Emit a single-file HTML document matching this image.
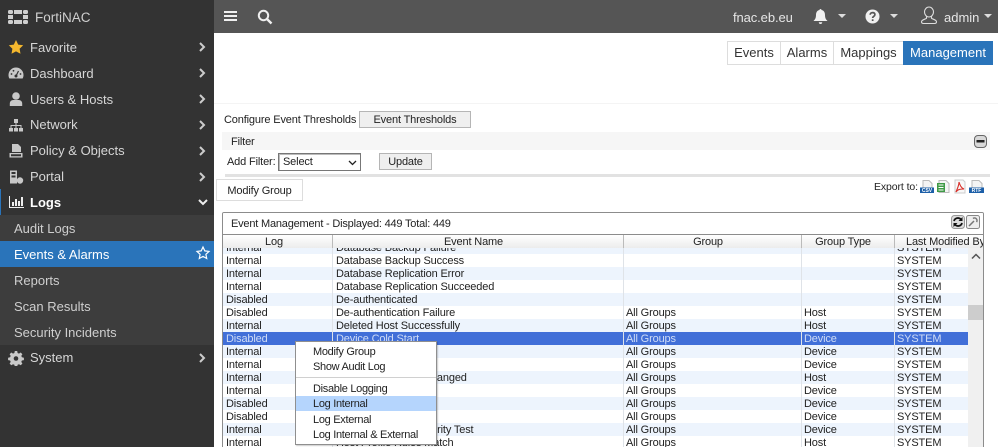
<!DOCTYPE html>
<html>
<head>
<meta charset="utf-8">
<style>
*{box-sizing:border-box}
html,body{margin:0;padding:0;width:998px;height:447px;overflow:hidden;background:#fff;font-family:"Liberation Sans",sans-serif}
#page{position:relative;width:998px;height:447px;overflow:hidden;background:#fff}
.a{position:absolute;white-space:nowrap}
#side{position:absolute;left:0;top:0;width:214px;height:447px;background:#333}
.m{position:absolute;left:0;width:214px;height:26px;line-height:27px;color:#d6d6d6;font-size:13px}
.m.u{line-height:25px}
.m span{position:absolute;left:30px}
.m svg.i{position:absolute;left:8px;top:5px}
.m svg.c{position:absolute;left:198px;top:8px}
.s span{left:14px}
.f{font-size:11px;letter-spacing:-.15px}
.r{position:absolute;left:0;width:745px;height:13px;font-size:11px;letter-spacing:-.15px;line-height:15px;color:#222}
.r.l{background:#edf4fd}
.r.w{background:#fff}
.r.x{background:#416fd8;color:#cfdcf6}
.r b{position:absolute;font-weight:normal;white-space:nowrap;top:0}
.c1{left:3px}.c2{left:113px}.c3{left:403px}.c4{left:581px}.c5{left:674px}
.sep{position:absolute;top:0;bottom:0;width:1px;background:#dfe3e8;z-index:50}
.tab{position:absolute;top:41px;height:24px;line-height:22px;text-align:center;font-size:13px;color:#333;background:#fff;border:1px solid #ddd}
.btn{position:absolute;background:#efefef;border:1px solid #b5b5b5;text-align:center;font-size:11px;letter-spacing:-.15px;color:#222}
.mi{position:absolute;left:0;width:140px;height:15px;line-height:17px;padding-left:17px;font-size:11px;letter-spacing:-.3px;color:#222;white-space:nowrap}
.hd{position:absolute;top:0;height:13px;line-height:15px;font-size:11px;letter-spacing:-.15px;color:#222;text-align:center;white-space:nowrap}
.lbl{font-family:"Liberation Sans",sans-serif;font-size:5px;font-weight:bold;fill:#fff}
</style>
</head>
<body>
<div id="page">

<div id="side">
  <svg class="a" style="left:8px;top:9px" width="20" height="16" viewBox="0 0 20 16" fill="#cfcfcf">
    <rect x="0" y="1" width="5" height="4" rx="1.500"/><rect x="6" y="1" width="8" height="4"/><rect x="15" y="1" width="5" height="4" rx="1.500"/>
    <rect x="0" y="6" width="5" height="4"/><rect x="15" y="6" width="5" height="4"/>
    <rect x="0" y="11" width="5" height="4" rx="1.500"/><rect x="6" y="11" width="8" height="4"/><rect x="15" y="11" width="5" height="4" rx="1.500"/>
  </svg>
  <div class="a" style="left:35px;top:9px;font-size:13.500px;line-height:17px;color:#cfcfcf">FortiNAC</div>

  <div class="m" style="top:34px"><svg class="i" width="16" height="16" viewBox="0 0 16 16"><path fill="#f5b82e" d="M8 1l2.200 4.600 5 .7-3.600 3.500.9 5L8 12.400 3.500 14.800l.9-5L.8 6.300l5-.7z"/></svg><span>Favorite</span><svg class="c" width="8" height="10" viewBox="0 0 8 10"><path d="M2 1l4 4-4 4" fill="none" stroke="#ccc" stroke-width="2"/></svg></div>

  <div class="m" style="top:60px"><svg class="i" width="16" height="16" viewBox="0 0 16 16"><path fill="#c8c8c8" d="M8 2.500a7.500 7.500 0 0 0-7.500 7.500c0 1.300.3 2.500.9 3.500h13.200c.6-1 .9-2.200.9-3.500A7.500 7.500 0 0 0 8 2.500z"/><circle cx="8" cy="11" r="1.500" fill="#333"/><path d="M8 11l2.500-5" stroke="#333" stroke-width="1.200"/><circle cx="3.500" cy="9" r=".9" fill="#333"/><circle cx="5.500" cy="5.800" r=".9" fill="#333"/><circle cx="12.500" cy="9" r=".9" fill="#333"/></svg><span>Dashboard</span><svg class="c" width="8" height="10" viewBox="0 0 8 10"><path d="M2 1l4 4-4 4" fill="none" stroke="#ccc" stroke-width="2"/></svg></div>

  <div class="m" style="top:86px"><svg class="i" width="16" height="16" viewBox="0 0 16 16" fill="#c8c8c8"><circle cx="8" cy="5" r="3.800"/><path d="M1.800 15v-2.500c0-2 1.500-3.500 3.500-3.500h5.400c2 0 3.500 1.500 3.500 3.500V15z"/></svg><span>Users &amp; Hosts</span><svg class="c" width="8" height="10" viewBox="0 0 8 10"><path d="M2 1l4 4-4 4" fill="none" stroke="#ccc" stroke-width="2"/></svg></div>

  <div class="m u" style="top:112px"><svg class="i" width="16" height="16" viewBox="0 0 16 16" fill="#c8c8c8"><rect x="6" y="2" width="4" height="4"/><rect x="1" y="11" width="4" height="3.500"/><rect x="6" y="11" width="4" height="3.500"/><rect x="11" y="11" width="4" height="3.500"/><path d="M7.500 6h1v2H13.500v3h-1V9h-4v2h-1V9h-4v2h-1V8h5z"/></svg><span>Network</span><svg class="c" width="8" height="10" viewBox="0 0 8 10"><path d="M2 1l4 4-4 4" fill="none" stroke="#ccc" stroke-width="2"/></svg></div>

  <div class="m u" style="top:138px"><svg class="i" width="16" height="16" viewBox="0 0 16 16" fill="#c8c8c8"><path d="M4 1h6l3 3v5H4z"/><path d="M1.500 10h13v4.500h-13z M3 11.300v2h10v-2z" fill-rule="evenodd"/></svg><span>Policy &amp; Objects</span><svg class="c" width="8" height="10" viewBox="0 0 8 10"><path d="M2 1l4 4-4 4" fill="none" stroke="#ccc" stroke-width="2"/></svg></div>

  <div class="m u" style="top:164px"><svg class="i" width="16" height="16" viewBox="0 0 16 16" fill="#c8c8c8"><path d="M2 1.500h7v13H2z M3.500 3v2h4V3z M3.500 6.500v2h4v-2z" fill-rule="evenodd"/><circle cx="12" cy="11.500" r="3.200"/></svg><span>Portal</span><svg class="c" width="8" height="10" viewBox="0 0 8 10"><path d="M2 1l4 4-4 4" fill="none" stroke="#ccc" stroke-width="2"/></svg></div>

  <div class="a" style="left:0;top:189px;width:1px;height:26px;background:#2a74ba"></div>
  <div class="m" style="top:189px;color:#fff;font-weight:bold"><svg class="i" width="16" height="16" viewBox="0 0 16 16" fill="#eee"><path d="M1 2h1v11h14v1H1z"/><rect x="4" y="8" width="2" height="4"/><rect x="7" y="5" width="2" height="7"/><rect x="10" y="7" width="2" height="5"/><rect x="13" y="3" width="2" height="9"/></svg><span>Logs</span><svg class="c" width="10" height="10" viewBox="0 0 10 10"><path d="M1 3l4 4 4-4" fill="none" stroke="#eee" stroke-width="2"/></svg></div>

  <div class="a" style="left:0;top:215px;width:214px;height:130px;background:#3d3d3d"></div>
  <div class="m s" style="top:215px;color:#cfcfcf"><span>Audit Logs</span></div>
  <div class="m s" style="top:241px;background:#2a74ba;color:#fff"><span>Events &amp; Alarms</span><svg class="a" style="left:195px;top:4px" width="16" height="16" viewBox="0 0 16 16"><path fill="none" stroke="#fff" stroke-width="1.200" d="M8 2l1.800 3.900 4.200.5-3.100 2.900.8 4.200L8 11.400l-3.700 2.100.8-4.200L2 6.400l4.200-.5z"/></svg></div>
  <div class="m s" style="top:267px;color:#cfcfcf"><span>Reports</span></div>
  <div class="m s" style="top:293px;color:#cfcfcf"><span>Scan Results</span></div>
  <div class="m s" style="top:319px;color:#cfcfcf"><span>Security Incidents</span></div>

  <div class="m u" style="top:345px"><svg class="i" width="16" height="16" viewBox="0 0 16 16"><path fill="#c8c8c8" d="M6.800 1h2.400l.4 2 1.400.6 1.700-1.100 1.700 1.700-1.100 1.700.6 1.400 2 .4v2.400l-2 .4-.6 1.400 1.100 1.700-1.700 1.700-1.700-1.100-1.400.6-.4 2H6.800l-.4-2-1.400-.6-1.700 1.100-1.700-1.700 1.100-1.700-.6-1.400-2-.4V7.700l2-.4.6-1.400-1.100-1.700 1.700-1.700L5 3.600 6.400 3z"/><circle cx="8" cy="8.500" r="2.300" fill="#333"/></svg><span>System</span><svg class="c" width="8" height="10" viewBox="0 0 8 10"><path d="M2 1l4 4-4 4" fill="none" stroke="#ccc" stroke-width="2"/></svg></div>
</div>

<!-- top bar -->
<div class="a" style="left:214px;top:0;width:784px;height:33px;background:#555"></div>
<svg class="a" style="left:224px;top:10px" width="14" height="12" viewBox="0 0 14 12" fill="#f0f0f0"><rect x="0" y="1" width="13" height="2"/><rect x="0" y="5" width="13" height="2"/><rect x="0" y="9" width="13" height="2"/></svg>
<svg class="a" style="left:257px;top:9px" width="16" height="16" viewBox="0 0 16 16"><circle cx="6.500" cy="6.500" r="4.700" fill="none" stroke="#f0f0f0" stroke-width="2"/><path d="M10 10l4.500 4.500" stroke="#f0f0f0" stroke-width="2.400"/></svg>
<div class="a" style="left:733px;top:9px;font-size:13px;letter-spacing:-.1px;line-height:17px;color:#e6e6e6">fnac.eb.eu</div>
<svg class="a" style="left:813px;top:8px" width="15" height="17" viewBox="0 0 15 17" fill="#f0f0f0"><path d="M7.500 1c.7 0 1 .4 1 1 2.500.5 3.500 2.500 3.500 5 0 3 1 4.500 2.500 6H.5C2 11.500 3 10 3 7c0-2.500 1-4.500 3.500-5 0-.6.300-1 1-1z"/><path d="M5.800 14.300h3.400a1.700 1.700 0 0 1-3.400 0z"/></svg>
<svg class="a" style="left:838px;top:14px" width="8" height="5"><path d="M0 0h8L4 4z" fill="#ddd"/></svg>
<svg class="a" style="left:865px;top:9px" width="15" height="15" viewBox="0 0 15 15"><circle cx="7.500" cy="7.500" r="7" fill="#f0f0f0"/><path d="M5.200 5.800c0-1.400 1-2.200 2.400-2.200s2.300.8 2.300 2c0 1.700-2.200 1.700-2.200 3.400" fill="none" stroke="#555" stroke-width="1.700"/><rect x="6.800" y="10.300" width="1.700" height="1.700" fill="#555"/></svg>
<svg class="a" style="left:890px;top:14px" width="8" height="5"><path d="M0 0h8L4 4z" fill="#ddd"/></svg>
<svg class="a" style="left:920px;top:6px" width="18" height="19" viewBox="0 0 18 19" fill="none" stroke="#ddd" stroke-width="1.100"><ellipse cx="9" cy="6" rx="4.500" ry="5"/><path d="M6.500 10.500v1.700c0 .8-5 1.300-5 3.600 0 1.200.8 1.700 2 1.700h11c1.200 0 2-.5 2-1.700 0-2.300-5-2.800-5-3.600v-1.700"/></svg>
<div class="a" style="left:944px;top:9px;font-size:13px;line-height:17px;color:#e6e6e6">admin</div>
<svg class="a" style="left:984px;top:14px" width="8" height="5"><path d="M0 0h8L4 4z" fill="#ddd"/></svg>

<!-- tabs -->
<div class="a" style="left:214px;top:103px;width:784px;height:1px;background:#f4f4f4"></div>
<div class="tab" style="left:727px;width:54px">Events</div>
<div class="tab" style="left:780px;width:54px">Alarms</div>
<div class="tab" style="left:833px;width:71px">Mappings</div>
<div class="tab" style="left:903px;width:90px;background:#2a74ba;color:#fff;border-color:#2a74ba">Management</div>

<!-- thresholds -->
<div class="a f" style="left:224px;top:112px;line-height:16px;color:#222">Configure Event Thresholds</div>
<div class="btn" style="left:359px;top:111px;width:112px;height:17px;line-height:17px">Event Thresholds</div>

<!-- filter -->
<div class="a" style="left:222px;top:132px;width:768px;height:18px;background:#f6f6f6"></div>
<div class="a f" style="left:231px;top:134px;line-height:16px;color:#222">Filter</div>
<svg class="a" style="left:974px;top:135px" width="13" height="13" viewBox="0 0 13 13"><rect x=".5" y=".5" width="12" height="12" rx="3.500" fill="#d8d8d8" stroke="#666"/><rect x="2.500" y="5" width="8" height="2.500" fill="#222"/></svg>
<div class="a f" style="left:227px;top:155px;line-height:14px;color:#222">Add Filter:</div>
<div class="a f" style="left:278px;top:153px;width:83px;height:18px;border:1px solid #777;background:#fff;line-height:17px;padding-left:4px;color:#222;box-shadow:inset 1px 1px 0 #bbb">Select</div>
<svg class="a" style="left:348px;top:160px" width="9" height="6" viewBox="0 0 9 6"><path d="M1 1l3.500 3.500L8 1" fill="none" stroke="#222" stroke-width="1.300"/></svg>
<div class="btn" style="left:379px;top:153px;width:53px;height:17px;line-height:17px">Update</div>
<div class="a" style="left:225px;top:174px;width:765px;height:3px;background:#e2e2e2"></div>

<!-- modify group tab -->
<div class="a f" style="left:216px;top:179px;width:87px;height:22px;border:1px solid #ddd;background:#fff;line-height:22px;text-align:center;color:#222">Modify Group</div>

<!-- export -->
<div class="a" style="left:874px;top:181px;font-size:10.500px;letter-spacing:-.1px;line-height:13px;color:#222">Export to:</div>
<svg class="a" style="left:920px;top:180px" width="14" height="14" viewBox="0 0 14 14"><path d="M3 .5h6l3 3v7H3z" fill="#f4f4f4" stroke="#bbb"/><rect x="0" y="7.500" width="14" height="5.500" fill="#1c5fa8"/><text class="lbl" x="7" y="12.200" text-anchor="middle">CSV</text></svg>
<svg class="a" style="left:936px;top:180px" width="14" height="14" viewBox="0 0 14 14"><path d="M3 .5h7l3 3v9H3z" fill="#f4f4f4" stroke="#bbb"/><rect x="1" y="3" width="8" height="9" fill="#3f9a46"/><path d="M2.500 5h5M2.500 7.500h5M2.500 10h5" stroke="#fff" stroke-width=".9"/></svg>
<svg class="a" style="left:953px;top:179px" width="14" height="15" viewBox="0 0 14 15"><path d="M2 1h8l2 2v11H2z" fill="#f8f8f8" stroke="#ccc"/><path d="M6 3c1 3 2 6 5 7-3 0-6 0-8 3 1-3 3-6 3-10z" fill="none" stroke="#d8302a" stroke-width="1.100"/></svg>
<svg class="a" style="left:969px;top:180px" width="15" height="14" viewBox="0 0 15 14"><path d="M3 .5h7l3 3v7H3z" fill="#f4f4f4" stroke="#bbb"/><rect x="0" y="7.500" width="15" height="5.500" fill="#1c5fa8"/><text class="lbl" x="7.500" y="12.200" text-anchor="middle">RTF</text></svg>

<!-- table panel -->
<div class="a" style="left:222px;top:212px;width:762px;height:240px;border:1px solid #8c8c8c;border-radius:2px 2px 0 0;background:#fff;overflow:hidden">
  <div class="a" style="left:0;top:0;width:760px;height:22px;background:#fff;font-size:11px;letter-spacing:-.2px;line-height:22px;padding-left:8px;color:#222;border-bottom:1px solid #8c8c8c">Event Management - Displayed: 449 Total: 449</div>
  <svg class="a" style="left:728px;top:2px" width="14" height="14" viewBox="0 0 14 14"><rect x=".5" y=".5" width="13" height="13" rx="3" fill="#ddd" stroke="#999"/><path d="M3 6a4 4 0 0 1 7-1.500M11 8a4 4 0 0 1-7 1.500" fill="none" stroke="#111" stroke-width="1.800"/><path d="M11.500 2v4h-4zM2.500 12V8h4z" fill="#111"/></svg>
  <svg class="a" style="left:743px;top:2px" width="14" height="14" viewBox="0 0 14 14"><rect x=".5" y=".5" width="13" height="13" rx="2" fill="#eee" stroke="#888"/><path d="M3 11l5-5M7 3.500a2.500 2.500 0 0 1 3.500 3.500" fill="none" stroke="#777" stroke-width="1.500"/></svg>

  <!-- header -->
  <div class="a" style="left:0;top:22px;width:760px;height:13px;background:linear-gradient(#fff,#ececec);overflow:hidden;z-index:60">
    <div class="hd" style="left:0;width:102px">Log</div>
    <div class="hd" style="left:110px;width:281px">Event Name</div>
    <div class="hd" style="left:401px;width:168px">Group</div>
    <div class="hd" style="left:579px;width:82px">Group Type</div>
    <div class="hd" style="left:683px;text-align:left">Last Modified By</div>
    <div class="sep" style="left:109px;background:#bbb"></div>
    <div class="sep" style="left:400px;background:#bbb"></div>
    <div class="sep" style="left:578px;background:#bbb"></div>
    <div class="sep" style="left:671px;background:#bbb"></div>
  </div>

  <!-- rows -->
  <div class="a" style="left:0;top:35px;width:745px;height:205px;overflow:hidden">
    <div class="r l" style="top:-7px;z-index:30"><b class="c1">Internal</b><b class="c2">Database Backup Failure</b><b class="c5">SYSTEM</b></div>
    <div class="r w" style="top:6px;z-index:29"><b class="c1">Internal</b><b class="c2">Database Backup Success</b><b class="c5">SYSTEM</b></div>
    <div class="r l" style="top:19px;z-index:28"><b class="c1">Internal</b><b class="c2">Database Replication Error</b><b class="c5">SYSTEM</b></div>
    <div class="r w" style="top:32px;z-index:27"><b class="c1">Internal</b><b class="c2">Database Replication Succeeded</b><b class="c5">SYSTEM</b></div>
    <div class="r l" style="top:45px;z-index:26"><b class="c1">Disabled</b><b class="c2">De-authenticated</b><b class="c5">SYSTEM</b></div>
    <div class="r w" style="top:58px;z-index:25"><b class="c1">Disabled</b><b class="c2">De-authentication Failure</b><b class="c3">All Groups</b><b class="c4">Host</b><b class="c5">SYSTEM</b></div>
    <div class="r l" style="top:71px;z-index:24"><b class="c1">Internal</b><b class="c2">Deleted Host Successfully</b><b class="c3">All Groups</b><b class="c4">Host</b><b class="c5">SYSTEM</b></div>
    <div class="r x" style="top:84px;z-index:23"><b class="c1">Disabled</b><b class="c2">Device Cold Start</b><b class="c3">All Groups</b><b class="c4">Device</b><b class="c5">SYSTEM</b></div>
    <div class="r l" style="top:97px;z-index:22"><b class="c1">Internal</b><b class="c2">Device Contact Up</b><b class="c3">All Groups</b><b class="c4">Device</b><b class="c5">SYSTEM</b></div>
    <div class="r w" style="top:110px;z-index:21"><b class="c1">Internal</b><b class="c2">Device Contact Lost</b><b class="c3">All Groups</b><b class="c4">Device</b><b class="c5">SYSTEM</b></div>
    <div class="r l" style="top:123px;z-index:20"><b class="c1">Internal</b><b class="c2">Device Descriptor Changed</b><b class="c3">All Groups</b><b class="c4">Host</b><b class="c5">SYSTEM</b></div>
    <div class="r w" style="top:136px;z-index:19"><b class="c1">Internal</b><b class="c2">Device Link Down</b><b class="c3">All Groups</b><b class="c4">Device</b><b class="c5">SYSTEM</b></div>
    <div class="r l" style="top:149px;z-index:18"><b class="c1">Disabled</b><b class="c2">Device Link Up</b><b class="c3">All Groups</b><b class="c4">Device</b><b class="c5">SYSTEM</b></div>
    <div class="r w" style="top:162px;z-index:17"><b class="c1">Disabled</b><b class="c2">Device Warm Start</b><b class="c3">All Groups</b><b class="c4">Device</b><b class="c5">SYSTEM</b></div>
    <div class="r l" style="top:175px;z-index:16"><b class="c1">Internal</b><b class="c2">Device Logging Security Test</b><b class="c3">All Groups</b><b class="c4">Device</b><b class="c5">SYSTEM</b></div>
    <div class="r w" style="top:188px;z-index:15"><b class="c1">Internal</b><b class="c2">Host Profile Rules Match</b><b class="c3">All Groups</b><b class="c4">Host</b><b class="c5">SYSTEM</b></div>
    <div class="sep" style="left:109px"></div>
    <div class="sep" style="left:400px"></div>
    <div class="sep" style="left:578px"></div>
    <div class="sep" style="left:671px"></div>
  </div>

  <!-- scrollbar -->
  <div class="a" style="left:745px;top:35px;width:15px;height:205px;background:#f0f0f0;z-index:55"></div>
  <svg class="a" style="left:748px;top:40px;z-index:56" width="10" height="7" viewBox="0 0 10 7"><path d="M1 5.500l4-4 4 4" fill="none" stroke="#555" stroke-width="1.500"/></svg>
  <div class="a" style="left:745px;top:92px;width:15px;height:15px;background:#cdcdcd;z-index:56"></div>
</div>

<!-- context menu -->
<div class="a" style="left:295px;top:341px;width:142px;height:104px;background:#fff;border:1px solid #8f8f8f;box-shadow:1px 1px 1px rgba(0,0,0,.2);z-index:70">
  <div class="mi" style="top:2px">Modify Group</div>
  <div class="mi" style="top:17px">Show Audit Log</div>
  <div class="a" style="left:0;top:35px;width:140px;height:1px;background:#d0d0d0"></div>
  <div class="mi" style="top:39px">Disable Logging</div>
  <div class="mi" style="top:54px;background:#b5d5fd">Log Internal</div>
  <div class="mi" style="top:70px">Log External</div>
  <div class="mi" style="top:85px">Log Internal &amp; External</div>
</div>

</div>
</body>
</html>
